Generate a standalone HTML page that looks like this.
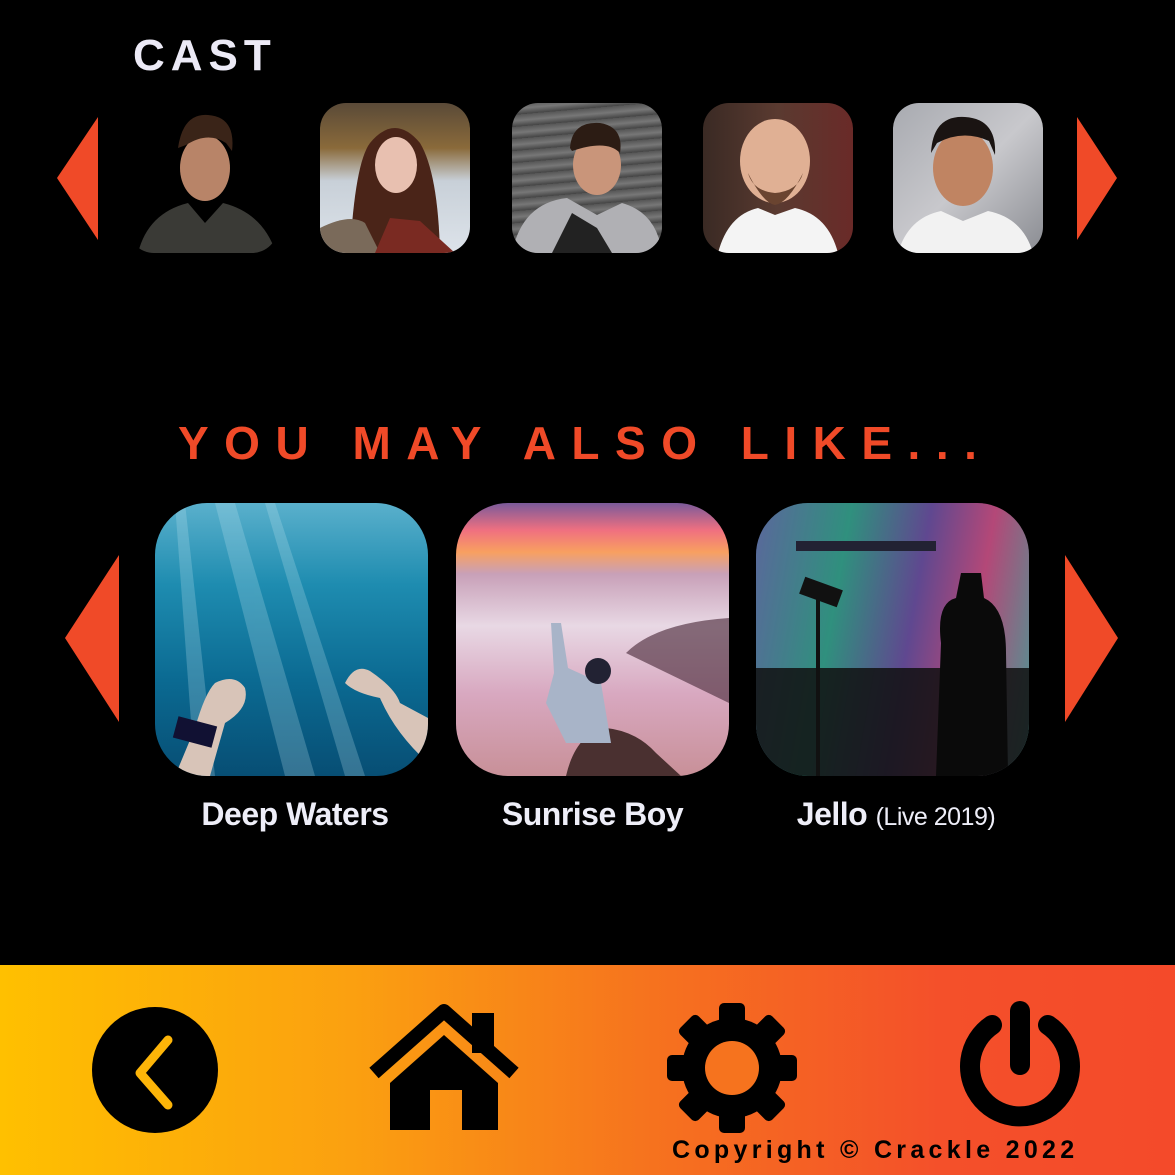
<!DOCTYPE html>
<html><head><meta charset="utf-8"><style>
*{margin:0;padding:0;box-sizing:border-box}
body{width:1175px;height:1175px;background:#000;position:relative;overflow:hidden;font-family:"Liberation Sans",sans-serif}
.abs{position:absolute}
.cast{position:absolute;top:103px;width:150px;height:150px;border-radius:26px;overflow:hidden}
.card{position:absolute;top:503px;width:273px;height:273px;border-radius:52px;overflow:hidden}
.t{position:absolute;top:796px;color:#eeeef8;font-size:32px;font-weight:bold;text-align:center;letter-spacing:-0.5px}
</style></head><body>
<div class="abs" style="left:133px;top:30px;color:#eceaf6;font-size:44px;font-weight:bold;letter-spacing:6px;line-height:52px">CAST</div>
<svg class="abs" style="left:0;top:0" width="1175" height="960">
<polygon points="57,178 98,117 98,240" fill="#f04a28"/>
<polygon points="1077,117 1117,178 1077,240" fill="#f04a28"/>
<polygon points="65,638 119,555 119,722" fill="#f04a28"/>
<polygon points="1065,555 1118,638 1065,722" fill="#f04a28"/>
</svg>
<div class="cast" style="left:128px;background:#000">
<svg width="150" height="150"><ellipse cx="77" cy="65" rx="25" ry="33" fill="#b88468"/><path d="M50 45 Q55 10 80 12 Q108 14 104 48 L98 40 Q80 28 58 42Z" fill="#3a2418"/><path d="M10 150 Q20 110 60 100 L77 120 L95 100 Q135 110 148 150Z" fill="#3a3a36"/></svg></div>
<div class="cast" style="left:320px;background:linear-gradient(#5a4a38 0,#8a6a3a 30%,#c8d0d8 52%,#dde3ea 100%)">
<svg width="150" height="150"><path d="M30 150 Q35 60 50 40 Q75 10 100 40 Q118 70 120 150Z" fill="#4a2418"/><ellipse cx="76" cy="62" rx="21" ry="28" fill="#e8c0b0"/><path d="M0 150 L0 125 Q30 110 45 120 L60 150Z" fill="#7a6a5a"/><path d="M55 150 L70 115 L100 118 L135 150Z" fill="#7a2a22"/></svg></div>
<div class="cast" style="left:512px;background:repeating-linear-gradient(175deg,#555 0,#777 6px,#444 12px)">
<svg width="150" height="150"><ellipse cx="85" cy="62" rx="24" ry="30" fill="#c9957a"/><path d="M58 45 Q60 18 88 20 Q112 24 108 50 Q95 36 60 48Z" fill="#2c1c14"/><path d="M0 150 Q10 100 55 95 L85 112 L110 100 Q145 110 150 150Z" fill="#b0b0b4"/><path d="M40 150 L60 110 L85 125 L100 150Z" fill="#222"/></svg></div>
<div class="cast" style="left:703px;background:linear-gradient(90deg,#3a2a24,#5a3a30 50%,#6a2a28)">
<svg width="150" height="150"><ellipse cx="72" cy="58" rx="35" ry="42" fill="#e0b094"/><path d="M72 90 Q50 88 45 70 Q60 100 72 102 Q85 100 100 70 Q95 88 72 90Z" fill="#6a4430"/><path d="M15 150 Q25 112 55 105 L72 112 L92 105 Q125 112 135 150Z" fill="#f4f4f4"/></svg></div>
<div class="cast" style="left:893px;background:linear-gradient(135deg,#a8aab0,#c8c8cc 50%,#8a8c92)">
<svg width="150" height="150"><ellipse cx="70" cy="65" rx="30" ry="38" fill="#c08462"/><path d="M38 50 Q40 12 72 14 Q104 16 102 52 L96 38 Q70 26 44 40Z" fill="#1a1412"/><path d="M5 150 Q15 115 48 108 L70 118 L95 108 Q130 115 140 150Z" fill="#f2f2f2"/></svg></div>

<div class="abs" style="left:178px;top:416px;color:#f04a28;font-size:46px;font-weight:bold;letter-spacing:15.5px;line-height:54px;white-space:nowrap">YOU MAY ALSO LIKE...</div>

<div class="card" style="left:155px;background:linear-gradient(#5ab0cc 0,#1e8cb0 30%,#0b6a92 65%,#074e74 100%)">
<svg width="273" height="273"><g fill="#bfe4ee" opacity=".25"><polygon points="60,0 80,0 160,273 130,273"/><polygon points="110,0 120,0 210,273 190,273"/><polygon points="20,0 30,0 60,273 40,273"/></g>
<path d="M20 273 L40 225 Q50 190 60 180 Q80 170 90 185 Q95 205 70 220 L55 273Z" fill="#d8c4b8"/><rect x="20" y="218" width="40" height="22" fill="#113" transform="rotate(15 40 229)"/><path d="M190 180 Q200 160 215 168 Q240 185 245 200 L273 215 L273 260 Q240 230 225 195 Q200 190 190 180Z" fill="#d8c4b8"/></svg></div>
<div class="card" style="left:456px;background:linear-gradient(#7a5a9a 0,#f07080 10%,#f8a060 18%,#c8a0b8 26%,#e8d8e4 45%,#d8a8c0 70%,#c89098 100%)">
<svg width="273" height="273"><path d="M110 273 Q120 230 150 225 Q180 228 200 250 L225 273Z" fill="#4a3030"/><path d="M273 115 Q200 120 170 150 L273 200Z" fill="#5a3a4a" opacity=".7"/><path d="M95 120 L105 120 L112 165 L145 180 L155 240 L110 240 L90 200 L98 170Z" fill="#a8b4c8"/><circle cx="142" cy="168" r="13" fill="#223"/></svg></div>
<div class="card" style="left:756px;background:linear-gradient(100deg,#7a8ad0 0,#40c0a8 30%,#8060c0 55%,#f060a0 75%,#60d0c8 100%)">
<svg width="273" height="273"><rect width="273" height="273" fill="#000" opacity=".25"/><rect x="0" y="165" width="273" height="108" fill="#111" opacity=".85"/><path d="M185 140 Q180 100 200 95 L205 70 L225 70 L228 95 Q250 105 250 150 L252 273 L180 273Z" fill="#0a0a0a"/><rect x="45" y="80" width="40" height="18" fill="#111" transform="rotate(20 65 89)"/><rect x="60" y="95" width="4" height="178" fill="#111"/><rect x="40" y="38" width="140" height="10" fill="#223"/></svg></div>

<div class="t" style="left:155px;width:280px">Deep Waters</div>
<div class="t" style="left:456px;width:273px">Sunrise Boy</div>
<div class="t" style="left:756px;width:280px">Jello <span style="font-size:25px;font-weight:normal">(Live 2019)</span></div>

<div class="abs" style="left:0;top:965px;width:1175px;height:210px;background:linear-gradient(90deg,#ffc000 0,#fba010 30%,#f6731e 55%,#f4502a 80%,#f44a2a 100%)"></div>
<svg class="abs" style="left:0;top:965px" width="1175" height="210">
<circle cx="155" cy="105" r="63" fill="#000"/>
<polyline points="168,75 140,108 168,140" fill="none" stroke="#fdb508" stroke-width="9" stroke-linecap="round" stroke-linejoin="round"/>
<path d="M374 108 L444 46 L514 108" fill="none" stroke="#000" stroke-width="14" stroke-linejoin="round"/>
<rect x="472" y="48" width="22" height="40" fill="#000"/>
<path d="M390 118 L444 70 L498 118 L498 165 L462 165 L462 125 L430 125 L430 165 L390 165Z" fill="#000"/>
<g transform="translate(732,103)" fill="#000">
<circle r="50"/>
<g id="tt"><rect x="-13" y="-65" width="26" height="30" rx="5"/><rect x="-13" y="35" width="26" height="30" rx="5"/></g>
<use href="#tt" transform="rotate(45)"/><use href="#tt" transform="rotate(90)"/><use href="#tt" transform="rotate(135)"/>
<circle r="27" fill="#f6731e"/></g>
<path d="M992 60 A50 50 0 1 0 1048 60" fill="none" stroke="#000" stroke-width="20" stroke-linecap="round"/>
<line x1="1020" y1="46" x2="1020" y2="100" stroke="#000" stroke-width="20" stroke-linecap="round"/>
</svg>
<div class="abs" style="left:672px;top:1136px;font-size:25px;font-weight:bold;letter-spacing:4.3px;color:#000;white-space:nowrap">Copyright © Crackle 2022</div>
</body></html>
